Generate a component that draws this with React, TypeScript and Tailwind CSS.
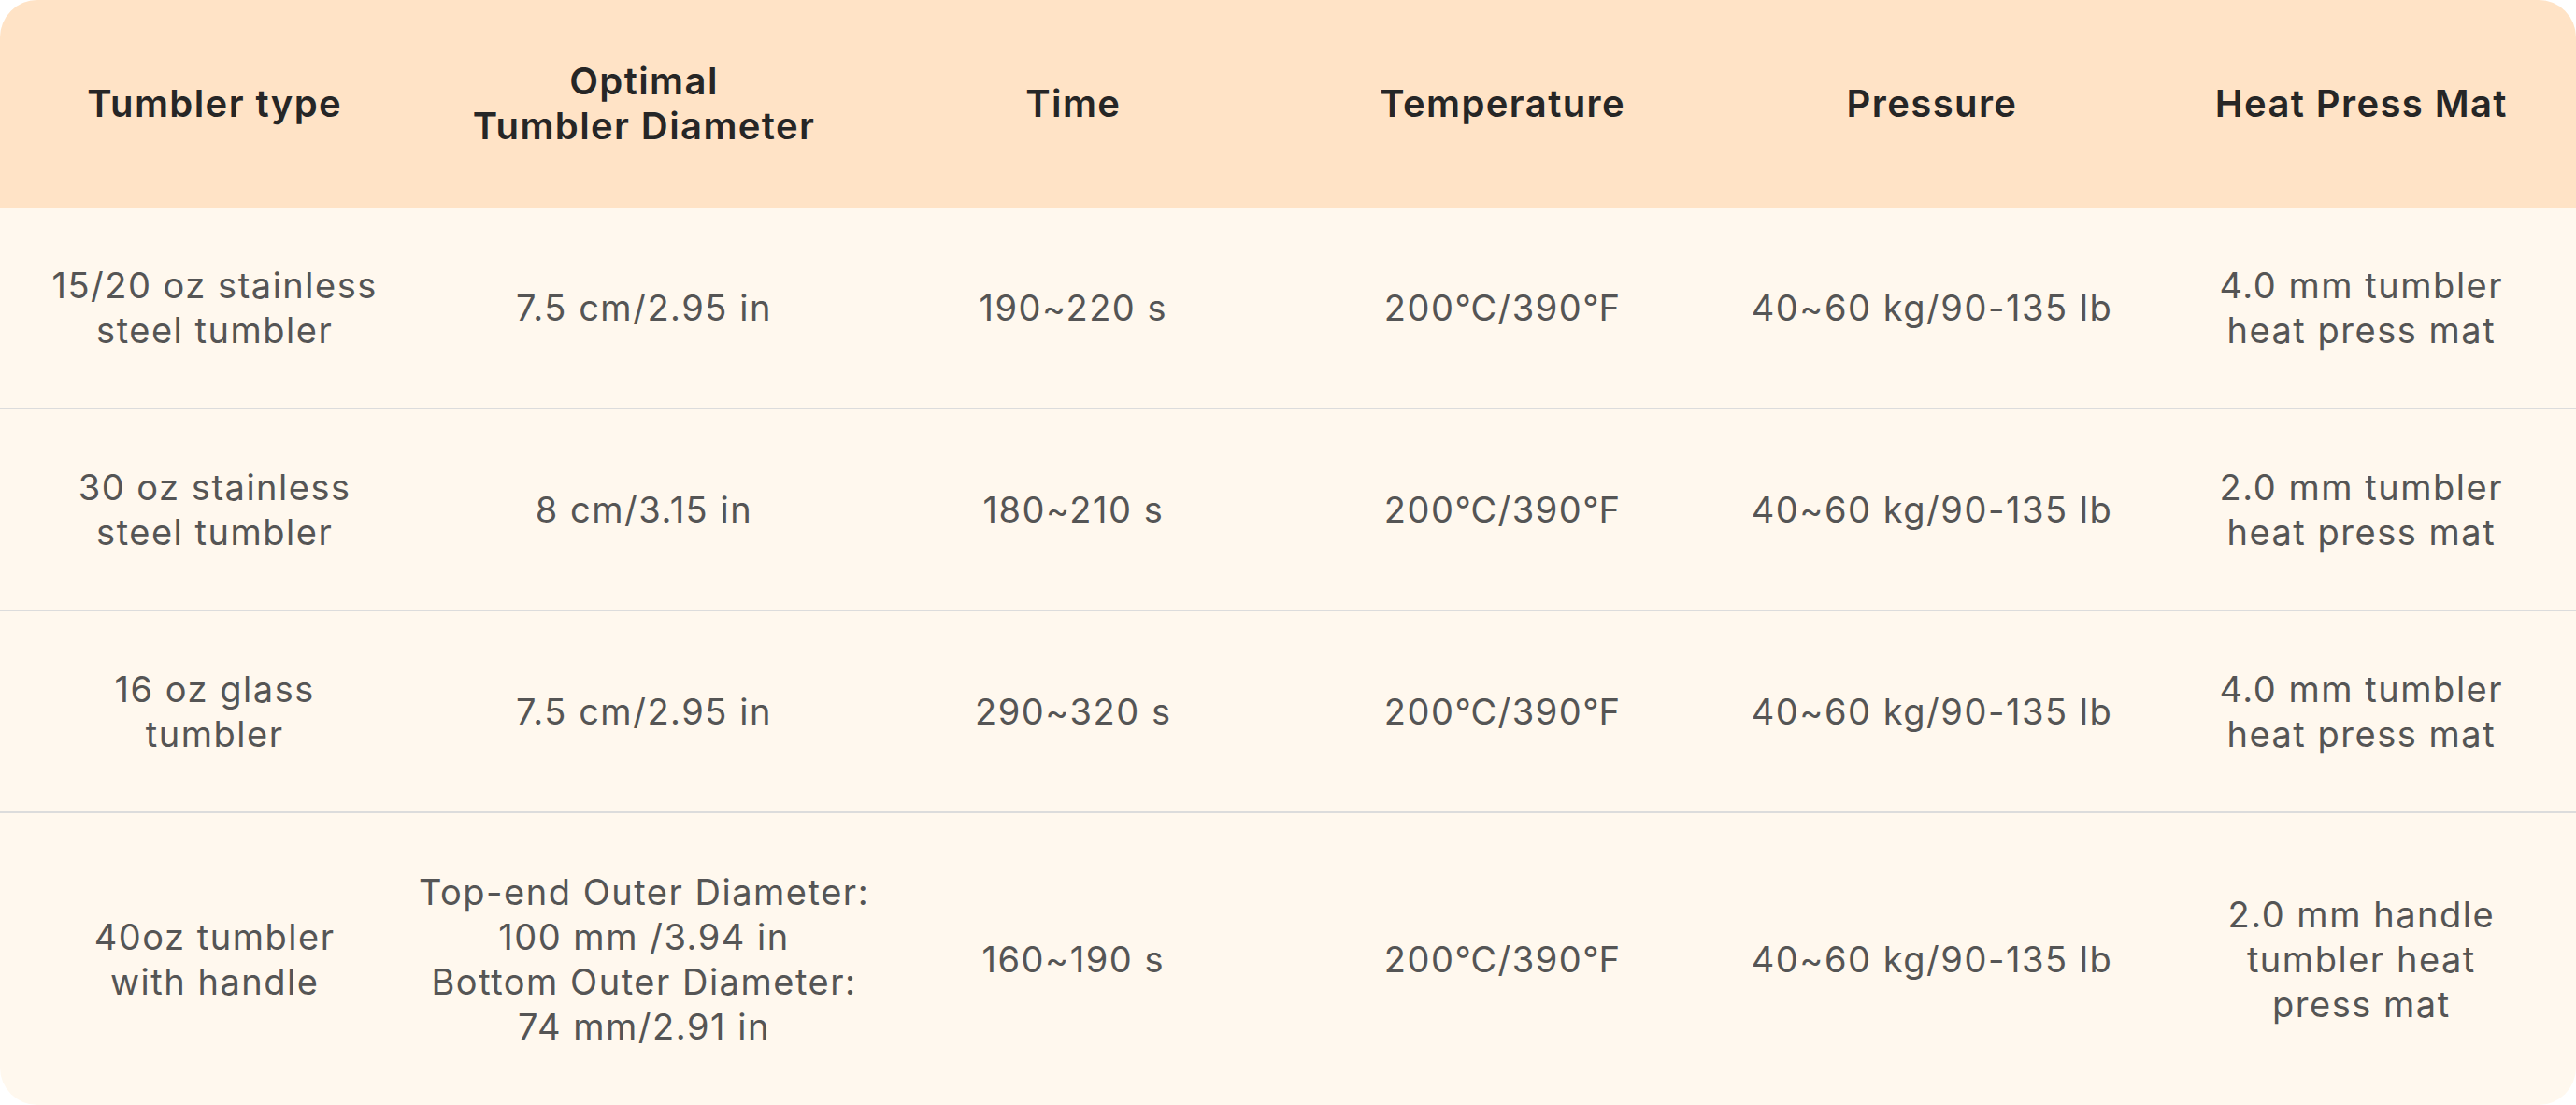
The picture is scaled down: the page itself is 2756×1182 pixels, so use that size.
const headers: string[][] = [
  ["Tumbler type"],
  ["Optimal", "Tumbler Diameter"],
  ["Time"],
  ["Temperature"],
  ["Pressure"],
  ["Heat Press Mat"],
];

const rows: string[][][] = [
  [
    ["15/20 oz stainless", "steel tumbler"],
    ["7.5 cm/2.95 in"],
    ["190~220 s"],
    ["200℃/390℉"],
    ["40~60 kg/90-135 lb"],
    ["4.0 mm tumbler", "heat press mat"],
  ],
  [
    ["30 oz stainless", "steel tumbler"],
    ["8 cm/3.15 in"],
    ["180~210 s"],
    ["200℃/390℉"],
    ["40~60 kg/90-135 lb"],
    ["2.0 mm tumbler", "heat press mat"],
  ],
  [
    ["16 oz glass", "tumbler"],
    ["7.5 cm/2.95 in"],
    ["290~320 s"],
    ["200℃/390℉"],
    ["40~60 kg/90-135 lb"],
    ["4.0 mm tumbler", "heat press mat"],
  ],
  [
    ["40oz tumbler", "with handle"],
    [
      "Top-end Outer Diameter:",
      "100 mm /3.94 in",
      "Bottom Outer Diameter:",
      "74 mm/2.91 in",
    ],
    ["160~190 s"],
    ["200℃/390℉"],
    ["40~60 kg/90-135 lb"],
    ["2.0 mm handle", "tumbler heat", "press mat"],
  ],
];

function Cell({ lines }: { lines: string[] }) {
  return (
    <div className="flex flex-col items-center text-center">
      {lines.map((line, i) => (
        <span key={i} className="whitespace-nowrap">
          {line}
        </span>
      ))}
    </div>
  );
}

export default function App() {
  return (
    <div className="w-[2756px] h-[1182px] bg-white font-['Inter',sans-serif]">
      <div className="rounded-[40px] overflow-hidden bg-[#fff8ee]">
        <div className="grid grid-cols-6 items-center bg-[#ffe3c6] py-[63px] text-[40px] leading-[48px] font-semibold tracking-[0.035em] text-[#262626]">
          {headers.map((h, i) => (
            <Cell key={i} lines={h} />
          ))}
        </div>
        {rows.map((row, r) => (
          <div
            key={r}
            className={
              r < rows.length - 1
                ? "grid grid-cols-6 items-center py-[59px] border-b-2 border-[#dcdcdc] text-[38px] leading-[48px] tracking-[0.04em] text-[#555555]"
                : "grid grid-cols-6 items-center pt-[60px] pb-[60px] text-[38px] leading-[48px] tracking-[0.04em] text-[#555555]"
            }
          >
            {row.map((c, i) => (
              <Cell key={i} lines={c} />
            ))}
          </div>
        ))}
      </div>
    </div>
  );
}
